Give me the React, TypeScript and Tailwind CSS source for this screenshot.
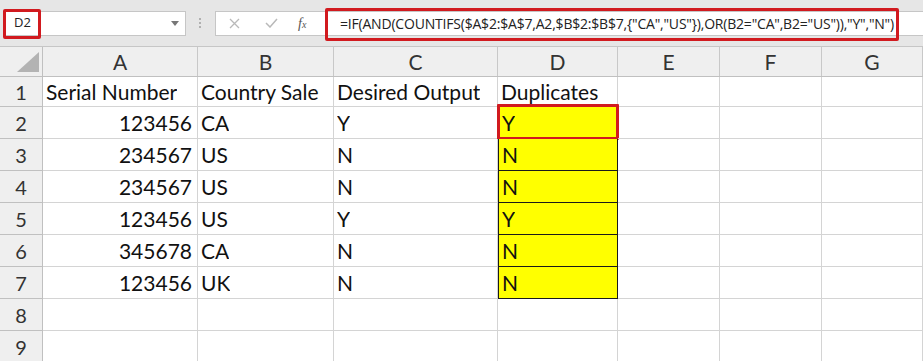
import { ReactNode } from 'react'

const COLS = ['A', 'B', 'C', 'D', 'E', 'F', 'G']
const COL_W = ['w-[155px]', 'w-[136px]', 'w-[164px]', 'w-[120px]', 'w-[102px]', 'w-[102px]', 'w-[101px]']

const ROWS: (string | null)[][] = [
  ['Serial Number', 'Country Sale', 'Desired Output', 'Duplicates'],
  ['123456', 'CA', 'Y', 'Y'],
  ['234567', 'US', 'N', 'N'],
  ['234567', 'US', 'N', 'N'],
  ['123456', 'US', 'Y', 'Y'],
  ['345678', 'CA', 'N', 'N'],
  ['123456', 'UK', 'N', 'N'],
  [],
  [],
]

const FORMULA = '=IF(AND(COUNTIFS($A$2:$A$7,A2,$B$2:$B$7,{"CA","US"}),OR(B2="CA",B2="US")),"Y","N")'

function Cell({ col, row, children }: { col: number; row: number; children?: ReactNode }) {
  const isNum = col === 0 && row > 0
  const yellow = col === 3 && row >= 1 && row <= 6
  return (
    <div
      className={[
        'relative shrink-0 h-full flex items-center px-[3px] border-r border-b',
        COL_W[col],
        isNum ? 'justify-end pr-[5px]' : '',
        yellow ? 'bg-[#ffff00] border-[#1a1a1a] border-l' : 'border-[#d4d4d4]',
      ].join(' ')}
    >
      <span className="truncate">{children}</span>
      {col === 3 && row === 1 && (
        <div className="absolute -left-[2px] -top-[3px] -right-[2px] -bottom-[2px] border-[3px] border-[#d11a1f] rounded-[1px]" />
      )}
    </div>
  )
}

export default function App() {
  return (
    <div className="w-[923px] h-[361px] overflow-hidden bg-white font-['Lato','Liberation_Sans',sans-serif] text-[#111]">
      {/* Formula bar */}
      <div className="h-[47px] bg-[#e6e6e6] flex items-center border-b border-[#c6c6c6]">
        <div className="relative ml-[4px] w-[182px] h-[25px] bg-white border border-[#c6c6c6] flex items-center">
          <span className="pl-[9px] text-[13px] text-[#222] font-['Open_Sans',sans-serif]">D2</span>
          <svg className="absolute right-[6px] top-[9px]" width="8" height="5" viewBox="0 0 8 5">
            <path d="M0 0 L8 0 L4 5 Z" fill="#777" />
          </svg>
          <div className="absolute -left-[2px] -top-[3px] w-[38px] h-[30px] border-[3px] border-[#d11a1f] rounded-[2px]" />
        </div>
        <div className="ml-[13px] flex flex-col gap-[2px]">
          <span className="w-[2px] h-[2px] bg-[#b0b0b0]" />
          <span className="w-[2px] h-[2px] bg-[#b0b0b0]" />
          <span className="w-[2px] h-[2px] bg-[#b0b0b0]" />
        </div>
        <div className="ml-[14px] w-[112px] h-[25px] bg-white border border-[#c6c6c6] flex items-center">
          <svg className="ml-[13px]" width="11" height="11" viewBox="0 0 11 11">
            <path d="M1 1 L10 10 M10 1 L1 10" stroke="#b9b9b9" strokeWidth="1.3" />
          </svg>
          <svg className="ml-[25px]" width="13" height="10" viewBox="0 0 13 10">
            <path d="M1 5 L5 9 L12 1" stroke="#b9b9b9" strokeWidth="1.5" fill="none" />
          </svg>
          <span className="ml-[20px] text-[14px] italic text-[#555] font-['Liberation_Serif',serif]">
            f<span className="text-[10px]">x</span>
          </span>
        </div>
        <div className="flex-1 h-[25px] bg-white border-y border-[#c6c6c6] flex items-center relative -ml-[2px]">
          <div className="absolute left-0 -top-[4px] w-[574px] h-[33px] border-[3px] border-[#d11a1f] rounded-[2px]" />
          <span className="pl-[15px] text-[14px] text-[#222] whitespace-nowrap font-['Open_Sans',sans-serif] tracking-[-0.2px]">
            {FORMULA}
          </span>
        </div>
      </div>

      {/* Column headers */}
      <div className="flex h-[30px] bg-[#efefef] border-b border-[#c0c0c0]">
        <div className="relative w-[43px] shrink-0 border-r border-[#c0c0c0]">
          <svg className="absolute right-[3px] bottom-[4px]" width="22" height="20" viewBox="0 0 22 20">
            <path d="M22 0 L22 20 L0 20 Z" fill="#b3b3b3" />
          </svg>
        </div>
        {COLS.map((c, i) => (
          <div
            key={c}
            className={`${COL_W[i]} shrink-0 border-r border-[#c8c8c8] flex items-center justify-center text-[21px] text-[#333]`}
          >
            {c}
          </div>
        ))}
      </div>

      {/* Rows */}
      {ROWS.map((r, ri) => (
        <div key={ri} className={`flex ${ri === 0 ? 'h-[30px]' : 'h-[32px]'} text-[21px]`}>
          <div className="w-[43px] shrink-0 bg-[#efefef] border-r border-b border-[#c0c0c0] flex items-center justify-center text-[20px] text-[#333]">
            {ri + 1}
          </div>
          {COLS.map((c, ci) => (
            <Cell key={c} col={ci} row={ri}>
              {r[ci] ?? null}
            </Cell>
          ))}
        </div>
      ))}
    </div>
  )
}
